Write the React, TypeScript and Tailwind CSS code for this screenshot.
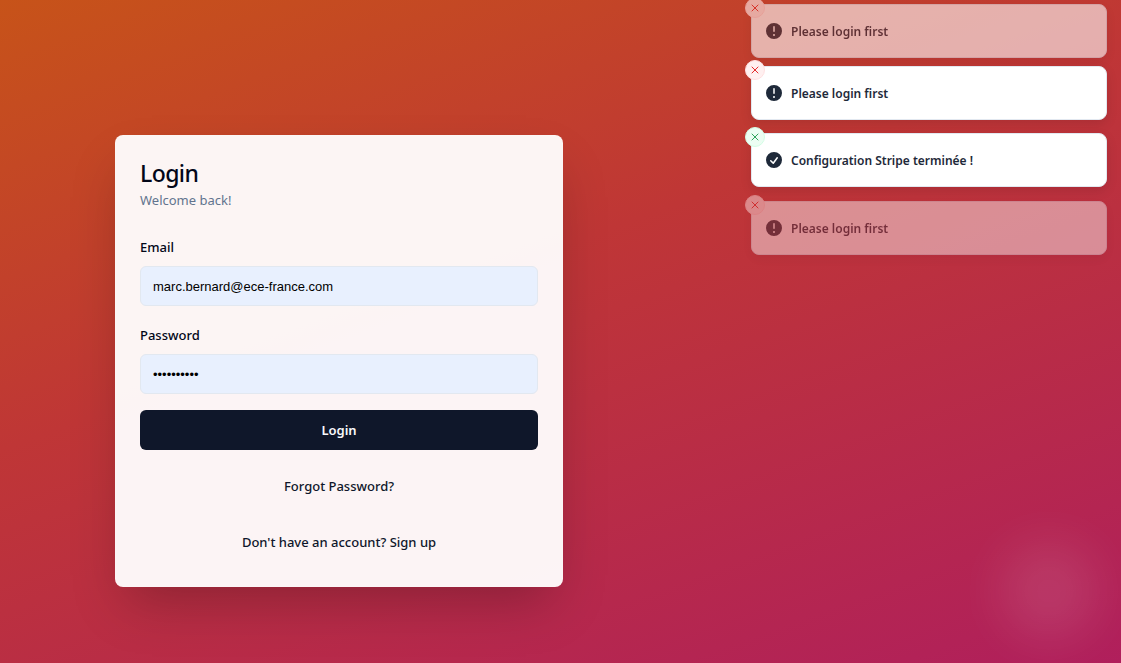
import { useState } from "react";
import clsx from "clsx";

type ToastKind = "error" | "success";

interface ToastItem {
  id: number;
  kind: ToastKind;
  message: string;
  className: string;
}

const toasts: ToastItem[] = [
  { id: 1, kind: "error", message: "Please login first", className: "opacity-60" },
  { id: 2, kind: "error", message: "Please login first", className: "mt-2" },
  { id: 3, kind: "success", message: "Configuration Stripe terminée !", className: "mt-[13px]" },
  { id: 4, kind: "error", message: "Please login first", className: "mt-3.5 opacity-45" },
];

const iconPaths: Record<ToastKind, string> = {
  error:
    "M18 10a8 8 0 11-16 0 8 8 0 0116 0zm-8-5a.75.75 0 01.75.75v4.5a.75.75 0 01-1.5 0v-4.5A.75.75 0 0110 5zm0 10a1 1 0 100-2 1 1 0 000 2z",
  success:
    "M10 18a8 8 0 100-16 8 8 0 000 16zm3.857-9.809a.75.75 0 00-1.214-.882l-3.483 4.79-1.88-1.88a.75.75 0 10-1.06 1.061l2.5 2.5a.75.75 0 001.137-.089l4-5.5z",
};

function Toast({ toast, onClose }: { toast: ToastItem; onClose: () => void }) {
  return (
    <li
      className={clsx(
        "relative flex items-center gap-[7px] rounded-lg border border-slate-200 bg-white py-4 pr-4 pl-3 text-xs font-semibold text-gray-800 shadow-[0_4px_12px_rgba(0,0,0,0.1)]",
        toast.className,
      )}
    >
      <button
        type="button"
        aria-label="Close toast"
        onClick={onClose}
        className={clsx(
          "absolute -top-[7px] -left-[7px] flex size-5 items-center justify-center rounded-full border",
          toast.kind === "error"
            ? "border-[#ffe0e1] bg-[#fff0f0] text-[#e62a2a]"
            : "border-[#d3fde5] bg-[#ecfdf3] text-[#2fa45c]",
        )}
      >
        <svg
          viewBox="0 0 24 24"
          className="size-3"
          fill="none"
          stroke="currentColor"
          strokeWidth="2"
          strokeLinecap="round"
          strokeLinejoin="round"
        >
          <path d="M18 6 6 18M6 6l12 12" />
        </svg>
      </button>
      <svg viewBox="0 0 20 20" className="size-5 shrink-0" fill="currentColor" aria-hidden="true">
        <path fillRule="evenodd" clipRule="evenodd" d={iconPaths[toast.kind]} />
      </svg>
      <span className="pt-0.5 leading-[18px]">{toast.message}</span>
    </li>
  );
}

const labelClass = "pt-0.5 text-[13px] leading-[22px] font-medium";
const inputClass =
  "block h-10 w-full rounded-md border border-slate-200 bg-[#e8f0fe] px-3 py-2 font-['Liberation_Sans',sans-serif] text-[13px] text-black outline-none";
const linkClass =
  "flex h-10 items-center justify-center px-4 pt-0.5 text-[13px] font-medium text-slate-900 hover:underline";

export default function App() {
  const [visible, setVisible] = useState(toasts);
  const [email, setEmail] = useState("marc.bernard@ece-france.com");
  const [password, setPassword] = useState("motdepasse");

  return (
    <div className="relative min-h-screen overflow-hidden bg-linear-[160deg] from-[#c75319] via-[#bf3636] via-42% to-[#b01f5c] font-['Noto_Sans','Open_Sans',sans-serif] text-slate-950">
      <div className="absolute right-6 bottom-6 size-24 rounded-full bg-white/10 blur-xl" />

      <main className="flex min-h-screen w-full max-w-[678px] items-center justify-center pt-[59px]">
        <section className="w-full max-w-md rounded-lg border border-white/10 bg-white/95 shadow-2xl">
          <header className="p-6">
            <h1 className="pt-0.5 text-[23px] leading-[22px] font-medium tracking-tight">Login</h1>
            <p className="mt-1.5 text-[13px] leading-5 text-slate-500">Welcome back!</p>
          </header>
          <form className="flex flex-col gap-4 px-6 pb-6" onSubmit={(e) => e.preventDefault()}>
            <div className="flex flex-col gap-2">
              <label htmlFor="email" className={labelClass}>
                Email
              </label>
              <input
                id="email"
                type="email"
                value={email}
                onChange={(e) => setEmail(e.target.value)}
                className={inputClass}
              />
            </div>
            <div className="flex flex-col gap-2">
              <label htmlFor="password" className={labelClass}>
                Password
              </label>
              <input
                id="password"
                type="password"
                value={password}
                onChange={(e) => setPassword(e.target.value)}
                className={inputClass}
              />
            </div>
            <button
              type="submit"
              className="h-10 w-full rounded-md bg-[#0f172a] pt-0.5 text-[13px] font-semibold text-slate-50"
            >
              Login
            </button>
            <a href="#forgot-password" className={linkClass}>
              Forgot Password?
            </a>
            <a href="#sign-up" className={linkClass}>
              Don't have an account? Sign up
            </a>
          </form>
        </section>
      </main>

      <ol className="absolute top-1 right-3.5 flex w-[356px] flex-col">
        {visible.map((toast) => (
          <Toast
            key={toast.id}
            toast={toast}
            onClose={() => setVisible((items) => items.filter((t) => t.id !== toast.id))}
          />
        ))}
      </ol>
    </div>
  );
}
